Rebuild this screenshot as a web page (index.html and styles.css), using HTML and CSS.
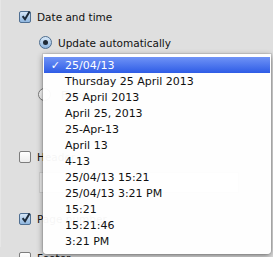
FILE: index.html
```html
<!DOCTYPE html>
<html>
<head>
<meta charset="utf-8">
<link rel="stylesheet" href="styles.css">
</head>
<body>
<div class="panel">
  <div class="row r1"><span class="cb checked"><svg viewBox="0 0 12 12" width="12" height="12"><path d="M2.6 6.2 L5 9.2 L9.6 1.6" fill="none" stroke="#1d2b3a" stroke-width="2"/></svg></span><span class="label">Date and time</span></div>
  <div class="row r2"><span class="radio on"><span class="dot"></span></span><span class="label">Update automatically</span></div>
  <div class="row r3"><span class="radio"></span><span class="label">Fixed</span></div>
  <div class="row r4"><span class="cb"></span><span class="label">Header</span></div>
  <div class="field"></div>
  <div class="row r5"><span class="cb checked"><svg viewBox="0 0 12 12" width="12" height="12"><path d="M2.6 6.2 L5 9.2 L9.6 1.6" fill="none" stroke="#1d2b3a" stroke-width="2"/></svg></span><span class="label">Page number</span></div>
  <div class="row r6"><span class="cb"></span><span class="label">Footer</span></div>
</div>
<div class="menu">
  <div class="item sel"><span class="chk">✓</span><span>25/04/13</span></div>
  <div class="item"><span class="chk"></span><span>Thursday 25 April 2013</span></div>
  <div class="item"><span class="chk"></span><span>25 April 2013</span></div>
  <div class="item"><span class="chk"></span><span>April 25, 2013</span></div>
  <div class="item"><span class="chk"></span><span>25-Apr-13</span></div>
  <div class="item"><span class="chk"></span><span>April 13</span></div>
  <div class="item"><span class="chk"></span><span>4-13</span></div>
  <div class="item"><span class="chk"></span><span>25/04/13 15:21</span></div>
  <div class="item"><span class="chk"></span><span>25/04/13 3:21 PM</span></div>
  <div class="item"><span class="chk"></span><span>15:21</span></div>
  <div class="item"><span class="chk"></span><span>15:21:46</span></div>
  <div class="item"><span class="chk"></span><span>3:21 PM</span></div>
</div>
</body>
</html>
```
FILE: styles.css
```css
html, body {
  margin: 0;
  padding: 0;
  width: 273px;
  height: 257px;
  overflow: hidden;
  background: #dfdfdf;
  font-family: "DejaVu Sans", sans-serif;
}
.panel {
  padding: 10px 0 0 18px;
  height: 247px;
  border-left: 1px solid #e6e6e6;
  box-sizing: border-box;
}
.row {
  display: flex;
  align-items: center;
  height: 13px;
}
.label {
  font-size: 10.5px;
  color: #111;
  margin-left: 6px;
}
.r2 { margin-top: 13px; padding-left: 20px; }
.r2 .label { margin-left: 6px; }
.r3 { margin-top: 39px; padding-left: 19px; }
.r3 .label { margin-left: 10px; color: #222; }
.r4 { margin-top: 49px; }
.r5 { margin-top: 19px; }
.r6 { margin-top: 26px; }
.field {
  margin: 9px 0 0 20px;
  width: 200px;
  height: 21px;
  background: #ececec;
  border: 1px solid #cfcfcf;
  box-sizing: border-box;
}
.cb {
  width: 12px;
  height: 12px;
  box-sizing: border-box;
  border: 1px solid #7d7d7d;
  border-radius: 2px;
  background: linear-gradient(#ffffff, #ededed);
  display: flex;
  align-items: center;
  justify-content: center;
  position: relative;
}
.cb.checked {
  border-color: #4f6f92;
  background: linear-gradient(#d5e6f7, #8fb6df);
}
.cb svg { position: absolute; left: 0; top: -2px; }
.radio {
  width: 13px;
  height: 13px;
  box-sizing: border-box;
  border-radius: 50%;
  border: 1px solid #7a7a7a;
  background: linear-gradient(#ffffff, #ececec);
  display: flex;
  align-items: center;
  justify-content: center;
}
.radio.on {
  border-color: #4d6d90;
  background: linear-gradient(#d9e9f8, #8db4de);
}
.dot {
  width: 5px;
  height: 5px;
  border-radius: 50%;
  background: #1f2a36;
}
.menu {
  position: absolute;
  left: 43px;
  top: 54px;
  width: 228px;
  height: 200px;
  box-sizing: border-box;
  padding: 3px 1px 4px 1px;
  background: rgba(255, 255, 255, 0.96);
  border-radius: 0 0 4px 4px;
  box-shadow: 0 2px 6px rgba(0, 0, 0, 0.45), 0 0 0 1px rgba(0, 0, 0, 0.08);
  font-size: 11px;
  color: #111;
}
.item {
  display: grid;
  grid-template-columns: 21px 1fr;
  height: 16px;
  align-items: center;
  white-space: nowrap;
}
.chk {
  text-align: right;
  padding-right: 5px;
  font-size: 11px;
}
.item.sel {
  background: linear-gradient(#6f93f6, #2e5ce6);
  color: #fff;
}
```
